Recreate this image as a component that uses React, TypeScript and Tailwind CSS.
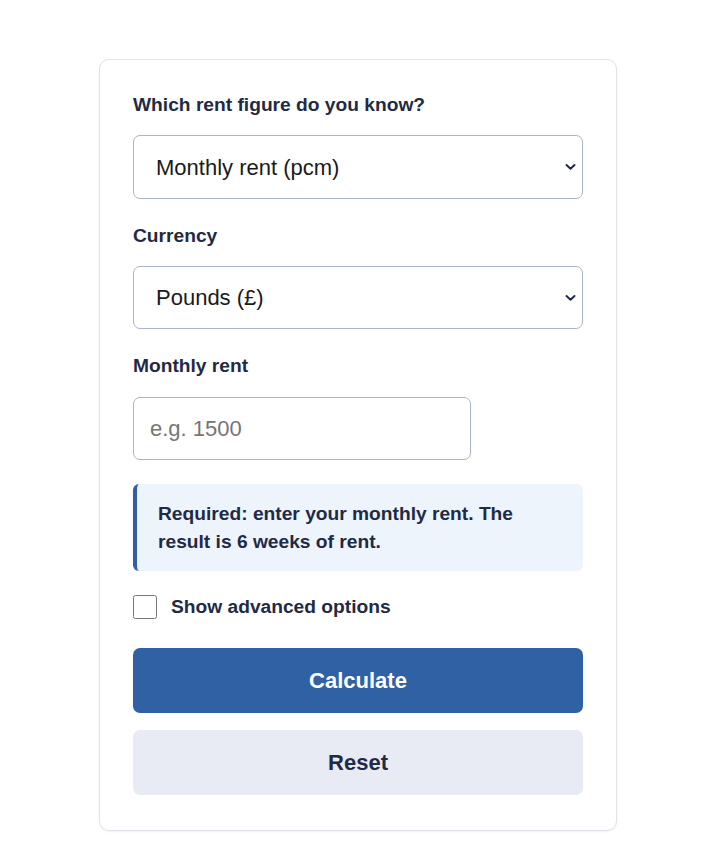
import React, { useState } from 'react';

const font = { fontFamily: '"Liberation Sans", Arial, sans-serif' };

const Chevron = () => (
  <svg
    className="pointer-events-none absolute right-[7px] top-1/2 -translate-y-1/2"
    width="11"
    height="7"
    viewBox="0 0 11 7"
    fill="none"
  >
    <path d="M1.5 1.5 5.5 5.2 9.5 1.5" stroke="#1f2a44" strokeWidth="2" strokeLinecap="round" strokeLinejoin="round" />
  </svg>
);

const App = () => {
  const [figure, setFigure] = useState('monthly');
  const [currency, setCurrency] = useState('gbp');
  const [rent, setRent] = useState('');
  const [advanced, setAdvanced] = useState(false);

  return (
    <div className="min-h-screen bg-white pt-[59px]" style={font}>
      <div className="ml-[99px] w-[518px] rounded-[10px] border border-[#dfe3ea] bg-white px-[33px] pt-[33px] pb-[35px] shadow-[0_1px_2px_rgba(0,0,0,0.06)]">
        {/* Rent figure */}
        <label className="block text-[19.2px] leading-6 font-bold text-[#1f2a44]">
          Which rent figure do you know?
        </label>
        <div className="relative mt-[18px]">
          <select
            value={figure}
            onChange={e => setFigure(e.target.value)}
            className="block h-[64px] w-full appearance-none rounded-[7px] border border-[#aab4c6] bg-white pl-[22px] pr-8 text-[22px] text-[#1a1a1a]"
          >
            <option value="monthly">Monthly rent (pcm)</option>
            <option value="weekly">Weekly rent (pw)</option>
          </select>
          <Chevron />
        </div>

        {/* Currency */}
        <label className="mt-[25px] block text-[19.2px] leading-6 font-bold text-[#1f2a44]">
          Currency
        </label>
        <div className="relative mt-[18px]">
          <select
            value={currency}
            onChange={e => setCurrency(e.target.value)}
            className="block h-[63px] w-full appearance-none rounded-[7px] border border-[#aab4c6] bg-white pl-[22px] pr-8 text-[22px] text-[#1a1a1a]"
          >
            <option value="gbp">Pounds (£)</option>
            <option value="eur">Euros (€)</option>
          </select>
          <Chevron />
        </div>

        {/* Monthly rent */}
        <label className="mt-[25px] block text-[19.2px] leading-6 font-bold text-[#1f2a44]">
          Monthly rent
        </label>
        <input
          type="text"
          value={rent}
          onChange={e => setRent(e.target.value)}
          placeholder="e.g. 1500"
          className="mt-[19px] block h-[63px] w-3/4 rounded-[7px] border border-[#aab4c6] bg-white px-4 text-[22px] text-[#1a1a1a] placeholder:text-[#767676]"
        />

        {/* Info */}
        <div className="mt-6 rounded-[6px] border-l-4 border-[#2f5fa5] bg-[#edf4fc] pt-4 pb-[15px] pl-[21px] pr-4 text-[19.2px] leading-[28px] font-bold text-[#1f2a44]">
          Required: enter your monthly rent. The result is 6 weeks of rent.
        </div>

        {/* Advanced */}
        <label className="mt-6 flex h-6 items-center gap-[14px] text-[19.2px] font-bold text-[#1f2a44]">
          <input
            type="checkbox"
            checked={advanced}
            onChange={e => setAdvanced(e.target.checked)}
            className="m-0 h-6 w-6"
          />
          Show advanced options
        </label>

        {/* Actions */}
        <button className="mt-[29px] block h-[65px] w-full rounded-[7px] bg-[#3161a5] text-[22px] font-bold text-white">
          Calculate
        </button>
        <button className="mt-[17px] block h-[65px] w-full rounded-[7px] bg-[#e8ebf3] text-[22px] font-bold text-[#1f2a44]">
          Reset
        </button>
      </div>
    </div>
  );
};

export default App;
